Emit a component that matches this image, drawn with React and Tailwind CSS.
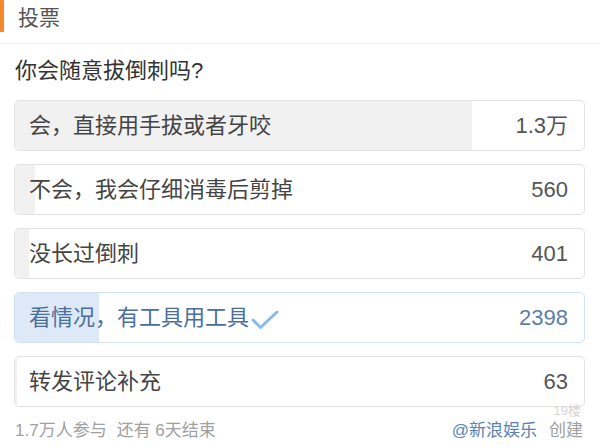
import React from 'react';

const options = [
  { label: '会，直接用手拔或者牙咬', count: 13000, text: '1.3万' },
  { label: '不会，我会仔细消毒后剪掉', count: 560, text: '560' },
  { label: '没长过倒刺', count: 401, text: '401' },
  { label: '看情况，有工具用工具', count: 2398, text: '2398', picked: true },
  { label: '转发评论补充', count: 63, text: '63' },
];

const total = options.reduce((sum, o) => sum + o.count, 0);

function Check() {
  return (
    <svg width="28" height="20" viewBox="0 0 28 20" className="ml-[2px] mt-[4px]">
      <path d="M2 10 L9.5 17.5 L26 2" fill="none" stroke="#8abbe8" strokeWidth="3" strokeLinecap="round" strokeLinejoin="round" />
    </svg>
  );
}

function Option({ option }) {
  // share of votes, drawn as a bar behind the row
  const pct = Math.min(100, (option.count / total) * 101.5);
  return (
    <div
      className={`relative h-[51px] rounded-[5px] border overflow-hidden flex items-center bg-white ${
        option.picked ? 'border-[#d3e2f1]' : 'border-[#e3e3e3]'
      }`}
    >
      <div
        className={`absolute left-0 top-0 bottom-0 ${option.picked ? 'bg-[#dde9f6]' : 'bg-[#f1f1f1]'}`}
        style={{ width: `${pct}%` }}
      />
      <div className="relative flex-1 flex items-center pl-[14px] pr-[16px]">
        <span className={`text-[22px] leading-[28px] ${option.picked ? 'text-[#4b6e9d]' : 'text-[#444]'}`}>
          {option.label}
        </span>
        {option.picked && <Check />}
        <span className={`ml-auto text-[22px] leading-[28px] ${option.picked ? 'text-[#5a7ea9]' : 'text-[#555]'}`}>
          {option.text}
        </span>
      </div>
    </div>
  );
}

export default function App() {
  return (
    <div
      className="w-[600px] h-[448px] bg-white overflow-hidden"
      style={{ fontFamily: '"Liberation Sans", "Noto Sans CJK SC", sans-serif' }}
    >
      {/* Header */}
      <div className="h-[44px] flex items-start border-b border-[#f0f0f0]">
        <div className="w-[4px] h-[32px] bg-[#f5892a] rounded-r-[1px]" />
        <div className="ml-[14px] mt-[4px] text-[21px] leading-[28px] text-[#555]">投票</div>
      </div>

      <div className="px-[14px]">
        <div className="mt-[13px] text-[22px] leading-[28px] text-[#333] pl-[1px]">你会随意拔倒刺吗?</div>

        <div className="mt-[15px] flex flex-col gap-[13px] pr-[1px]">
          {options.map((o) => (
            <Option key={o.label} option={o} />
          ))}
        </div>

        <div className="mt-[12px] flex items-center text-[17px] leading-[24px] pl-[1px] pr-[3px]">
          <span className="text-[#a0a0a0]">1.7万人参与</span>
          <span className="ml-[10px] text-[#a0a0a0]">还有 6天结束</span>
          <span className="ml-auto relative">
            <span className="text-[#5b82b6]">@新浪娱乐</span>
            <span className="ml-[12px] text-[#a0a0a0]">创建</span>
            <span className="absolute right-[2px] -top-[16px] text-[13px] leading-[16px] text-[#d6d6d6]">19楼</span>
          </span>
        </div>
      </div>
    </div>
  );
}
